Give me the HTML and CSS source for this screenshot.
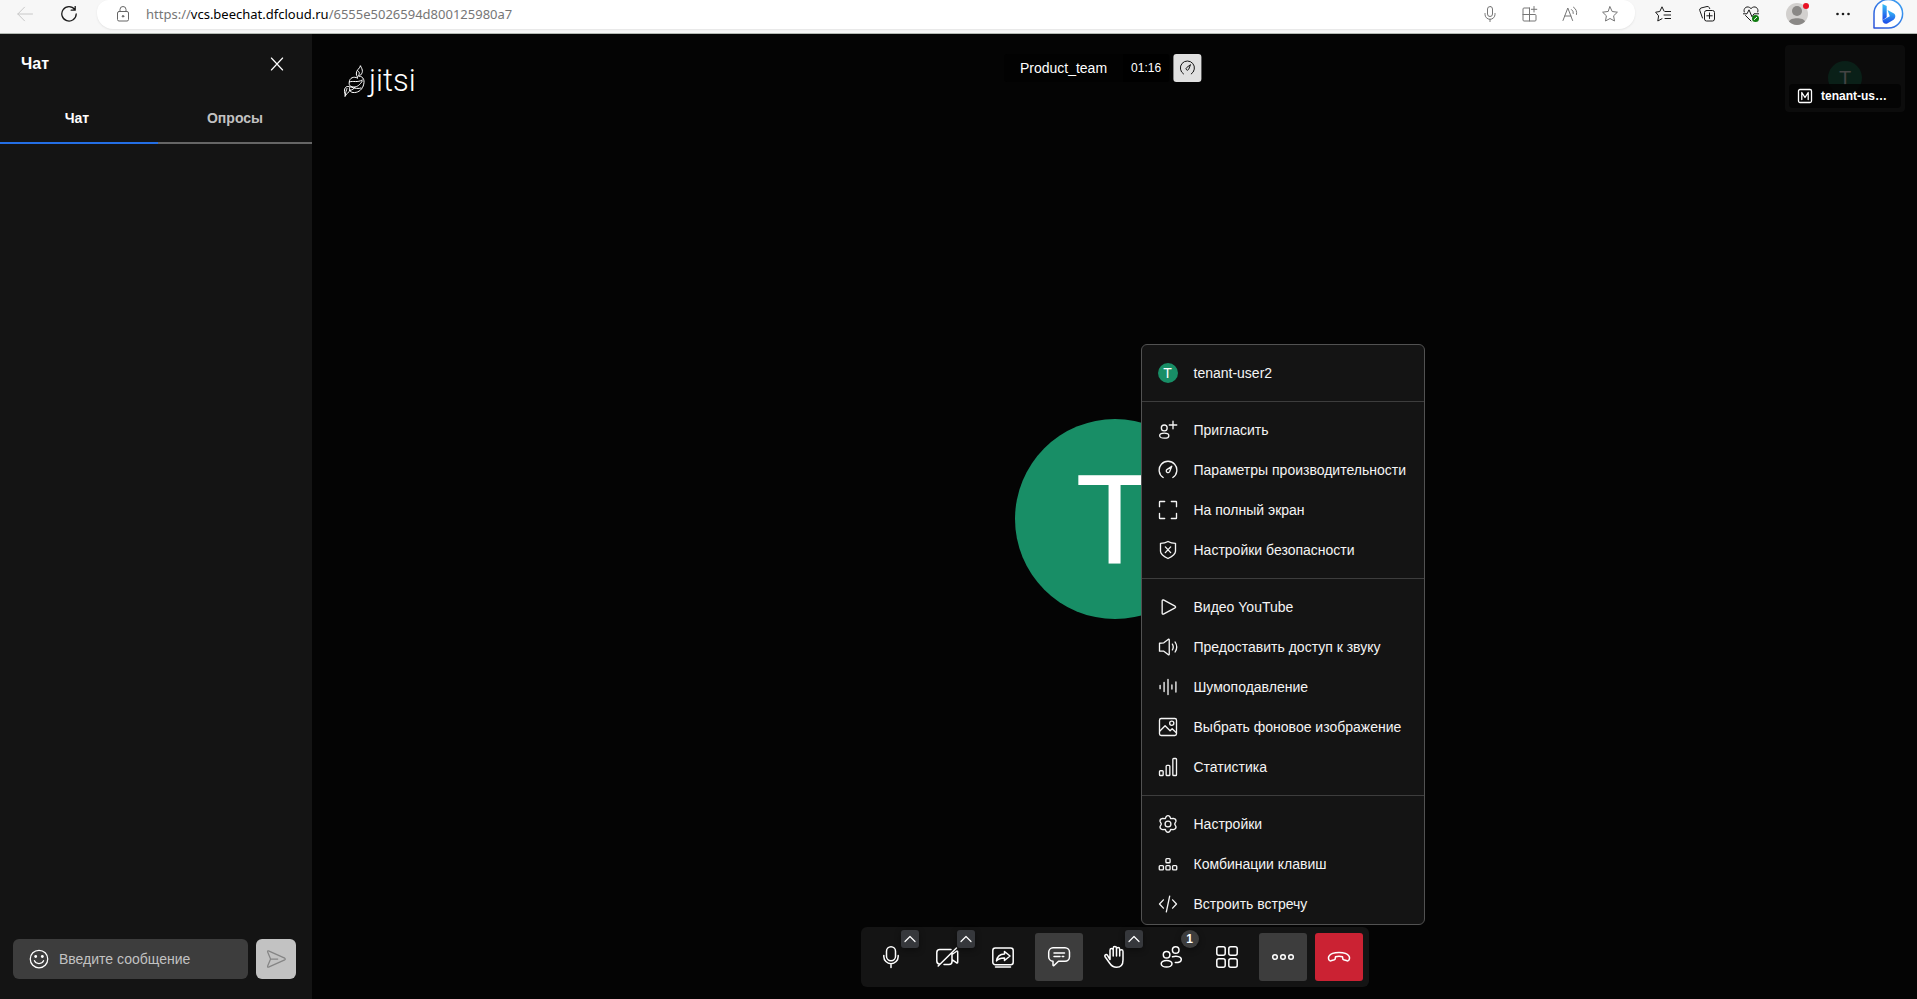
FILE: index.html
```html
<!DOCTYPE html>
<html lang="ru">
<head>
<meta charset="utf-8">
<title>Product_team | Jitsi Meet</title>
<link rel="stylesheet" href="styles.css">
</head>
<body>
<svg class="sprite" aria-hidden="true">
  <symbol id="gauge" viewBox="0 0 24 24"><path d="M6.2 21A10.6 10.6 0 1 1 17.8 21"/><path d="M16.5 7.5l-2.6 6.6a2.1 2.1 0 1 1-3.2-2.6z"/></symbol>
  <symbol id="caret" viewBox="0 0 18 18"><path d="M4 11.5l5-5 5 5"/></symbol>
</svg>

<header class="browser">
  <button class="nav back" aria-label="Назад"><svg viewBox="0 0 16 16"><path d="M15.5 8H.8M7.5 1.200L.8 8l6.700 6.800"/></svg></button>
  <button class="nav reload" aria-label="Обновить"><svg viewBox="0 0 16 16"><path d="M13.800 3.600A7.200 7.200 0 1 0 15.200 8M14.200.3v3.900h-4"/></svg></button>
  <div class="omnibox">
    <svg class="lock" viewBox="0 0 16 16"><rect x="2.500" y="5.500" width="11" height="9.500" rx="1.500"/><path d="M5 5.500V3.500a3 3 0 0 1 6 0v2"/><circle cx="8" cy="10.300" r=".8" fill="currentColor"/></svg>
    <a class="url" href="#">https://<b>vcs.beechat.dfcloud.ru</b>/6555e5026594d800125980a7</a>
    <div class="omni-tools">
      <button aria-label="Голосовой поиск"><svg viewBox="0 0 16 16"><rect x="5.500" y=".5" width="5" height="10" rx="2.500"/><path d="M3 7.500v.8a5 5 0 0 0 10 0v-.8M8 13.300V16"/></svg></button>
      <button aria-label="Приложения"><svg viewBox="0 0 16 16"><path d="M7.500 2H2a1 1 0 0 0-1 1v11a1 1 0 0 0 1 1h11a1 1 0 0 0 1-1V9.500a1 1 0 0 0-1-1H1M7.500 2v13M12 .5v5.500M9.300 3.300h5.500"/></svg></button>
      <button aria-label="Прочесть вслух"><svg viewBox="0 0 16 16"><path d="M1 14.500L5.800 2l4.800 12.500M2.700 10h6.200M9.500 3.500a4 4 0 0 1 1.800 4M11.500 1.200a7 7 0 0 1 3 7.300"/></svg></button>
      <button aria-label="В избранное"><svg viewBox="0 0 16 16"><path d="M8 .8l2.200 4.700 5.200.7-3.800 3.600.9 5.200L8 12.500 3.500 15l.9-5.200L.6 6.200l5.200-.7z"/></svg></button>
    </div>
  </div>
  <div class="browser-tools">
    <button aria-label="Избранное"><svg viewBox="0 0 16 16"><path d="M9 5L7 .8 4.800 5.500l-4.200.7 3 3.600-.8 5.200 4.200-2.300M10 5.500h6M9 9h7M10 12.500h6"/></svg></button>
    <button aria-label="Коллекции"><svg viewBox="0 0 16 16"><rect x="5.500" y="4.500" width="10" height="10.500" rx="2"/><path d="M3.500 12L.8 4.500A2 2 0 0 1 2 2l6-1.500a2 2 0 0 1 2.300 1.200l.4.900M10.500 7v5.500M7.800 9.800h5.400"/></svg></button>
    <button aria-label="Производительность"><svg viewBox="0 0 16 16"><path d="M1.200 6C-.2 2 4.500-1.200 8 2.600 11.500-1.200 16.200 2 14.800 6M2.500 9.500L8 15M0 7.800h4l2-4 3 7 2-3h5"/><circle cx="12.500" cy="12.500" r="3.500" fill="#107c10" stroke="none"/><path d="M11.300 13.500l2.400-2.200" stroke="#fff"/></svg></button>
    <button class="profile" aria-label="Профиль"><svg viewBox="0 0 24 24"><g stroke="none"><circle cx="12" cy="12" r="11" fill="#d2d0ce"/><circle cx="12" cy="9" r="5" fill="#8a8886"/><path d="M4 19.500C5 15 19 15 20 19.500A11 11 0 0 1 4 19.500z" fill="#8a8886"/><circle cx="21" cy="4" r="3" fill="#e81123"/></g></svg></button>
    <button aria-label="Ещё"><svg viewBox="0 0 16 16"><g fill="currentColor" stroke="none"><circle cx="2.500" cy="8" r="1.300"/><circle cx="8" cy="8" r="1.300"/><circle cx="13.500" cy="8" r="1.300"/></g></svg></button>
    <button class="bing" aria-label="Bing"><svg viewBox="0 0 32 32">
      <defs><linearGradient id="bg1" x1="0" y1="1" x2="1" y2="0"><stop offset="0" stop-color="#2a50d8"/><stop offset="1" stop-color="#3ea6f4"/></linearGradient><linearGradient id="bg2" x1="0" y1="0" x2="0" y2="1"><stop offset="0" stop-color="#39c2f6"/><stop offset="1" stop-color="#1b48e8"/></linearGradient></defs>
      <path d="M2 30V16A14.300 14.300 0 1 1 16.500 30z" fill="#fff" stroke="url(#bg1)" stroke-width="1.500"/>
      <path d="M10.500 6l4.200 2v11.200l-4.200 3z" fill="url(#bg2)" stroke="none"/><path d="M15.500 12l6.500 3.400c2.400 2 1.200 5.200-.8 6.600l-6 3.500c-2.200.9-4.700-.7-4.700-3.300l7.300-4z" fill="url(#bg2)" stroke="none"/></svg></button>
  </div>
</header>

<main class="app">
  <aside class="chat">
    <div class="chat-head"><h1>Чат</h1><button aria-label="Закрыть"><svg viewBox="0 0 24 24"><path d="M4.500 4L19.500 20M19.500 4L4.500 20"/></svg></button></div>
    <div class="tabs" role="tablist"><button class="tab active" role="tab" aria-selected="true">Чат</button><button class="tab" role="tab" aria-selected="false">Опросы</button></div>
    <div class="messages"></div>
    <form class="composer">
      <div class="field">
        <button type="button" aria-label="Эмодзи"><svg viewBox="0 0 24 24"><circle cx="12" cy="12" r="10.500"/><path d="M6.500 14c1.600 4.600 9.400 4.600 11 0"/><g fill="currentColor" stroke="none"><circle cx="8" cy="9" r="1.700"/><circle cx="16" cy="9" r="1.700"/></g></svg></button>
        <input type="text" aria-label="Введите сообщение" placeholder="Введите сообщение">
      </div>
      <button class="send" type="button" aria-label="Отправить"><svg viewBox="0 0 24 24"><path d="M3 2.200L22.500 11q1.300 1 0 2L3 21.800q-1.500.4-1-1.300L5.500 12 2 3.500q-.5-1.700 1-1.300zM5.500 12H14"/></svg></button>
    </form>
  </aside>

  <section class="stage">
    <a class="logo" href="#"><svg viewBox="0 0 24 32"><path d="M17.500 1c2.500 4 3 7-1 10M17.500 1c-1 3-4.500 4-4.200 8 .2 2 1.600 2.600 1.200 4M15 6c2.500 1.500 1 4 0 5.500M16 11c5 .5 6 5 4.200 10-1.700 4.600-6 7-10.200 6.500-3-.4-4.700-3-3-5.500M14.500 13c-4-2-8 0-8.200 4 4-1.500 8 1 13-2M6.300 17c-1 4 1.700 5 5 5 3 0 6-2.500 8-6M8 22c3 1.500 8 2 10 1M7 22c-3-1.500-5 0-5.500 3-.4 2.500 1 4 .5 6.500 1-3 4-3 5-7M4 23.500c-.5 2-1.500 3-1.500 6M12 22c-1 2-3 3-5 3.500"/></svg><span>jitsi</span></a>
    <div class="subject"><span class="room">Product_team</span><time class="timer">01:16</time><button class="quality" aria-label="Параметры производительности"><svg><use href="#gauge"/></svg></button></div>
    <div class="thumb"><span class="avatar small">T</span>
      <div class="tag"><svg viewBox="0 0 16 16"><rect x="1.500" y="1.500" width="13" height="13" rx="1.500"/><path d="M4.800 11.500v-7L8 9.500l3.200-5v7"/></svg><span>tenant-us…</span></div></div>
    <div class="avatar big">T</div>

    <div class="toolbar" role="toolbar">
      <div class="tool"><button class="main-btn" aria-label="Микрофон"><svg viewBox="0 0 24 24"><rect x="7.500" y="1.800" width="9" height="14" rx="4.500"/><path d="M4.800 10.500v1a7.200 7.200 0 0 0 14.400 0v-1M12 19v3.500"/></svg></button><button class="more-btn" aria-label="Настройки звука"><svg><use href="#caret"/></svg></button></div>
      <div class="tool"><button class="main-btn" aria-label="Камера"><svg viewBox="0 0 24 24"><path d="M4.500 19A3 3 0 0 1 1.800 16V7.500a3 3 0 0 1 3-3H16M17 8v8.500a3 3 0 0 1-3 3H9M17 9.500l5-3.500q.7 0 .7.800v10.500q0 .8-.7.800l-5-3.500M3.200 21L21.500 3"/></svg></button><button class="more-btn" aria-label="Настройки видео"><svg><use href="#caret"/></svg></button></div>
      <div class="tool"><button class="main-btn" aria-label="Демонстрация экрана"><svg viewBox="0 0 24 24"><rect x="1.800" y="3" width="20.400" height="16.800" rx="2.500"/><path d="M4.500 22h15"/><path d="M13.500 6.500l5.500 4.500-5.500 4.500v-2.600c-4-.1-6.200.8-8 3 .5-4 3-6.800 8-7z"/></svg></button></div>
      <div class="tool"><button class="main-btn on" aria-label="Чат"><svg viewBox="0 0 24 24"><path d="M6 2.800h12a4.500 4.500 0 0 1 4.500 4.500v4.400a4.500 4.500 0 0 1-4.500 4.500h-6.500L7 20.500q-1.200.5-1-1v-3.300a4.500 4.500 0 0 1-4.300-4.500V7.300A4.500 4.500 0 0 1 6 2.800zM7 8h10.500M7 11.500h6M15.200 11.500h1.500"/></svg></button></div>
      <div class="tool"><button class="main-btn" aria-label="Поднять руку"><svg viewBox="0 0 24 24"><path d="M7 14.500V5.200a1.600 1.600 0 0 1 3.200 0V11M10.200 11V3.200a1.600 1.600 0 0 1 3.300 0V11M13.500 11V4.200a1.600 1.600 0 0 1 3.200 0V11M16.700 11V6.500a1.600 1.600 0 0 1 3.300 0V15c0 4.500-2.500 7.300-6.500 7.300-3.500 0-5-1.300-7-4.300l-4.600-6.500c-.6-1.800 1.600-2.500 2.600-1.200L7 14.500"/></svg></button><button class="more-btn" aria-label="Реакции"><svg><use href="#caret"/></svg></button></div>
      <div class="tool"><button class="main-btn" aria-label="Участники"><svg viewBox="0 0 24 24"><circle cx="7.600" cy="9.800" r="3.300"/><ellipse cx="7.600" cy="18.700" rx="5.400" ry="3.300"/><circle cx="16.700" cy="5" r="3.300"/><path d="M13.500 11.800c4-1 8.800-.3 8.800 2.600 0 2.200-2.600 3.200-6 3.200"/></svg></button><span class="count">1</span></div>
      <div class="tool"><button class="main-btn" aria-label="Плитка"><svg viewBox="0 0 24 24"><rect x="1.800" y="1.800" width="8.400" height="8.400" rx="2"/><rect x="13.800" y="1.800" width="8.400" height="8.400" rx="2"/><rect x="1.800" y="13.800" width="8.400" height="8.400" rx="2"/><rect x="13.800" y="13.800" width="8.400" height="8.400" rx="2"/></svg></button></div>
      <div class="tool">
        <button class="main-btn on" aria-label="Больше действий"><svg viewBox="0 0 24 24"><circle cx="4" cy="12" r="2.300"/><circle cx="12" cy="12" r="2.300"/><circle cx="20" cy="12" r="2.300"/></svg></button>
        <div class="menu" role="menu">
          <div class="group"><button role="menuitem"><span class="avatar mini">T</span>tenant-user2</button></div>
          <div class="group">
            <button role="menuitem"><svg viewBox="0 0 24 24"><circle cx="7.500" cy="9.500" r="3.500"/><ellipse cx="7.500" cy="18.800" rx="5.500" ry="3"/><path d="M18 1.500v9M13.500 6h9"/></svg>Пригласить</button>
            <button role="menuitem"><svg><use href="#gauge"/></svg>Параметры производительности</button>
            <button role="menuitem"><svg viewBox="0 0 24 24"><path d="M1.800 8V2.500q0-.7.700-.7H8M16 1.800h5.500q.7 0 .7.700V8M22.200 16v5.500q0 .7-.7.700H16M8 22.200H2.500q-.7 0-.7-.7V16"/></svg>На полный экран</button>
            <button role="menuitem"><svg viewBox="0 0 24 24"><path d="M12 1.800c2.500 1.500 5.500 2.200 9 2.200v9.500c0 4-4 6.200-9 8.700-5-2.500-9-4.700-9-8.700V4c3.500 0 6.500-.7 9-2.200zM8.800 8.300l6.400 6.900M15.200 8.300l-6.400 6.900"/></svg>Настройки безопасности</button>
          </div>
          <div class="group">
            <button role="menuitem"><svg viewBox="0 0 24 24"><path d="M5 4.500v15.200q.2 1.200 1.500.8l14-7.500q1.300-1 0-2L6.500 3.500Q5.200 3.300 5 4.500z"/></svg>Видео YouTube</button>
            <button role="menuitem"><svg viewBox="0 0 24 24"><path d="M1.800 7.500V17H7l5.500 4.300q1 .2 1-.8V3.500q0-1-1-.8L7 7zM17.300 8.500q2 3.500 0 7M20.500 6q4 6 0 12"/></svg>Предоставить доступ к звуку</button>
            <button role="menuitem"><svg viewBox="0 0 24 24"><path d="M2.500 10v4M7.300 6.500v11M12 3v18M16.700 9.500v5M21.500 6v12"/></svg>Шумоподавление</button>
            <button role="menuitem"><svg viewBox="0 0 24 24"><rect x="1.800" y="1.800" width="20.400" height="20.400" rx="2"/><circle cx="16.500" cy="7.500" r="2.500"/><path d="M2 17l6.500-6.500 6 6 2.500-2.500 5 5"/></svg>Выбрать фоновое изображение</button>
            <button role="menuitem"><svg viewBox="0 0 24 24"><rect x="1.800" y="16.500" width="4.400" height="5.700" rx="1"/><rect x="9.800" y="10" width="4.400" height="12.200" rx="1"/><rect x="17.800" y="1.800" width="4.400" height="20.400" rx="1"/></svg>Статистика</button>
          </div>
          <div class="group">
            <button role="menuitem"><svg viewBox="0 0 24 24"><circle cx="12" cy="12" r="3.500"/><path d="M9.700 3.200Q12 .8 14.300 3.200L15.300 5.600 18.500 5.300Q21.800 5.800 21.600 8.600L20 12l1.600 3.400Q21.800 18.200 18.500 18.700L15.300 18.400 14.300 20.800Q12 23.200 9.700 20.800L8.700 18.400 5.500 18.700Q2.200 18.200 2.400 15.400L4 12 2.400 8.600Q2.200 5.800 5.500 5.300L8.700 5.600z"/></svg>Настройки</button>
            <button role="menuitem"><svg viewBox="0 0 24 24"><rect x="9.500" y="5.500" width="5" height="5" rx="1"/><rect x="1.500" y="14" width="5" height="5" rx="1"/><rect x="9.500" y="14" width="5" height="5" rx="1"/><rect x="17.500" y="14" width="5" height="5" rx="1"/></svg>Комбинации клавиш</button>
            <button role="menuitem"><svg viewBox="0 0 24 24"><path d="M6.500 7L1.800 12l4.700 5M17.500 7l4.700 5-4.700 5M14 2.500L10 21.500"/></svg>Встроить встречу</button>
          </div>
        </div>
      </div>
      <div class="tool"><button class="main-btn hangup" aria-label="Завершить звонок"><svg viewBox="0 0 24 24"><path d="M12 7.500c4.500 0 8.500 1.200 10 3.700.7 1.200.5 3-.3 4.200-.4.500-1 .6-1.600.4l-3.400-1c-.8-.3-1-.8-1-1.600l-.2-1.400a12 12 0 0 0-7 0l-.2 1.400c0 .8-.2 1.300-1 1.600l-3.400 1c-.6.200-1.200.1-1.600-.4-.8-1.200-1-3-.3-4.200C3.500 8.700 7.500 7.500 12 7.500z"/></svg></button></div>
    </div>
  </section>
</main>
</body>
</html>
```

FILE: styles.css
```css
* { box-sizing: border-box; }
body {
  margin: 0;
  height: 100vh;
  display: flex;
  flex-direction: column;
  overflow: hidden;
  background: #040404;
  color: #fff;
  font: 14px/20px "Liberation Sans", Arial, sans-serif;
}
button {
  margin: 0;
  padding: 0;
  border: 0;
  background: none;
  color: inherit;
  font: inherit;
  display: flex;
  align-items: center;
  justify-content: center;
}
a { color: inherit; text-decoration: none; }
svg {
  display: block;
  flex: none;
  fill: none;
  stroke: currentColor;
  stroke-width: 1.5;
  stroke-linecap: round;
  stroke-linejoin: round;
}
.sprite { position: absolute; width: 0; height: 0; }

/* Browser bar */
.browser {
  flex: none;
  height: 34px;
  display: flex;
  align-items: flex-start;
  background: #f7f7f7;
  border-bottom: 1px solid #b4bab4;
  color: #1b1b1b;
}
.browser svg { width: 16px; height: 16px; stroke-width: 1; }
.browser button { height: 28px; }
.back { margin-left: 17px; color: #c8c8c8; }
.reload { margin-left: 28px; }
.browser .reload svg { stroke-width: 1.3; }
.omnibox {
  flex: 1;
  height: 29px;
  margin-left: 20px;
  padding: 0 17px 1px 18px;
  display: flex;
  align-items: center;
  background: #fff;
  border-radius: 12px 12px 16px 16px;
  box-shadow: 0 1px 2px #e4e4e4;
}
.lock { color: #666; }
.url {
  margin-left: 15px;
  color: #767676;
  font: 13px/20px "Noto Sans", "Open Sans", sans-serif;
}
.url b { font-weight: 400; color: #000; }
.omni-tools { margin-left: auto; display: flex; gap: 24px; color: #767676; }
.browser-tools { display: flex; margin-left: 6px; padding-right: 6px; }
.browser-tools button { width: 44px; }
.browser .profile { width: 48px; }
.browser .profile svg { width: 24px; height: 24px; }
.browser .bing { width: 46px; }
.browser .bing svg { width: 32px; height: 32px; }

.app { flex: 1; min-height: 0; display: flex; }

/* Chat panel */
.chat {
  flex: none;
  width: 312px;
  display: flex;
  flex-direction: column;
  background: #141414;
}
.chat-head {
  height: 60px;
  padding: 0 26px 0 21px;
  display: flex;
  align-items: center;
  justify-content: space-between;
}
.chat-head h1 { margin: 0; font-size: 16px; line-height: 24px; }
.chat-head svg { width: 18px; height: 18px; }
.tabs { display: flex; }
.tab {
  flex: 1;
  height: 50px;
  color: #c2c2c2;
  font-weight: 700;
  border-bottom: 2px solid #666;
}
.tab.active { padding-right: 4px; color: #fff; border-color: #246fe5; }
.messages { flex: 1; }
.composer { display: flex; gap: 8px; padding: 0 16px 20px 13px; }
.field {
  flex: 1;
  min-width: 0;
  height: 40px;
  padding: 0 16px;
  display: flex;
  align-items: center;
  gap: 10px;
  background: #3d3d3d;
  border-radius: 6px;
}
.field svg, .send svg { width: 20px; height: 20px; }
.field input {
  flex: 1;
  min-width: 0;
  padding: 0;
  border: 0;
  outline: 0;
  background: none;
  color: #fff;
  font: inherit;
}
.field input::placeholder { color: #c2c2c2; opacity: 1; }
.send { width: 40px; height: 40px; border-radius: 6px; background: #c2c2c2; color: #858585; }

/* Conference stage */
.stage {
  flex: 1;
  min-width: 0;
  position: relative;
  display: flex;
  align-items: center;
  justify-content: center;
}
.logo {
  position: absolute;
  top: 31px;
  left: 31px;
  display: flex;
  align-items: center;
  gap: 2px;
  font: 300 31px/32px Roboto, sans-serif;
}
.logo svg { width: 24px; height: 32px; stroke-width: 1; }
.subject {
  position: absolute;
  top: 20px;
  left: 50%;
  transform: translateX(-50%);
  display: flex;
  padding-right: 24px;
  line-height: 28px;
}
.room { padding: 0 16px; background: #020202; border-radius: 3px 0 0 3px; }
.timer { padding: 0 8px; background: #000; font-size: 12px; border-radius: 0 3px 3px 0; }
.quality { width: 28px; height: 28px; margin-left: 4px; border-radius: 3px; background: #e0e0e0; color: #141414; }
.quality svg { width: 16px; height: 16px; }
.thumb {
  position: absolute;
  top: 11px;
  right: 12px;
  width: 120px;
  height: 67px;
  padding: 4px;
  display: flex;
  justify-content: center;
  align-items: flex-end;
  border-radius: 4px;
  background: #0c0c0c;
}
.tag {
  flex: 1;
  height: 24px;
  padding: 0 8px;
  display: flex;
  align-items: center;
  gap: 8px;
  border-radius: 4px;
  background: #030303e0;
  font-size: 12px;
  font-weight: 700;
  z-index: 1;
}
.tag svg { width: 16px; height: 16px; stroke-width: 1.3; }
.avatar {
  display: flex;
  align-items: center;
  justify-content: center;
  flex: none;
  border-radius: 50%;
  background: #188e66;
  color: #fff;
}
.avatar.big { width: 200px; height: 200px; margin-top: 4px; font-size: 128px; line-height: 200px; }
.avatar.small {
  position: absolute;
  top: 16px;
  left: 43px;
  width: 34px;
  height: 34px;
  background: #0a2018;
  color: #444;
  font-size: 20px;
}
.avatar.mini { width: 20px; height: 20px; font-size: 14px; }

/* Toolbar */
.toolbar {
  position: absolute;
  bottom: 12px;
  left: 50%;
  transform: translateX(-50%);
  display: flex;
  gap: 8px;
  padding: 6px;
  border-radius: 6px;
  background: #141414;
}
.tool { position: relative; }
.main-btn { width: 48px; height: 48px; border-radius: 3px; }
.main-btn svg { width: 24px; height: 24px; }
.main-btn.on { background: #3d3d3d; }
.main-btn.hangup { background: #cb2233; }
.more-btn, .count {
  position: absolute;
  top: -3px;
  right: -4px;
  width: 18px;
  height: 18px;
  border-radius: 3px;
  background: #36383c;
  box-shadow: 0 2px 6px #0006;
}
.more-btn svg { width: 18px; height: 18px; stroke-width: 1.2; }
.count {
  border-radius: 50%;
  background: #3d3d3d;
  font-size: 12px;
  font-weight: 700;
  line-height: 18px;
  text-align: center;
}

/* Overflow menu */
.menu {
  position: absolute;
  bottom: 56px;
  left: 50%;
  transform: translateX(-50%);
  width: 284px;
  border: 1px solid #525252;
  border-radius: 6px;
  background: #141414;
  color: #f5f5f5;
}
.group { padding: 8px 0; }
.group + .group { border-top: 1px solid #3d3d3d; }
.group:last-child { padding-bottom: 0; }
.group button {
  width: 100%;
  height: 40px;
  padding: 0 16px;
  justify-content: flex-start;
  gap: 16px;
  white-space: nowrap;
}
.group svg { width: 20px; height: 20px; stroke-width: 1.6; }
```
